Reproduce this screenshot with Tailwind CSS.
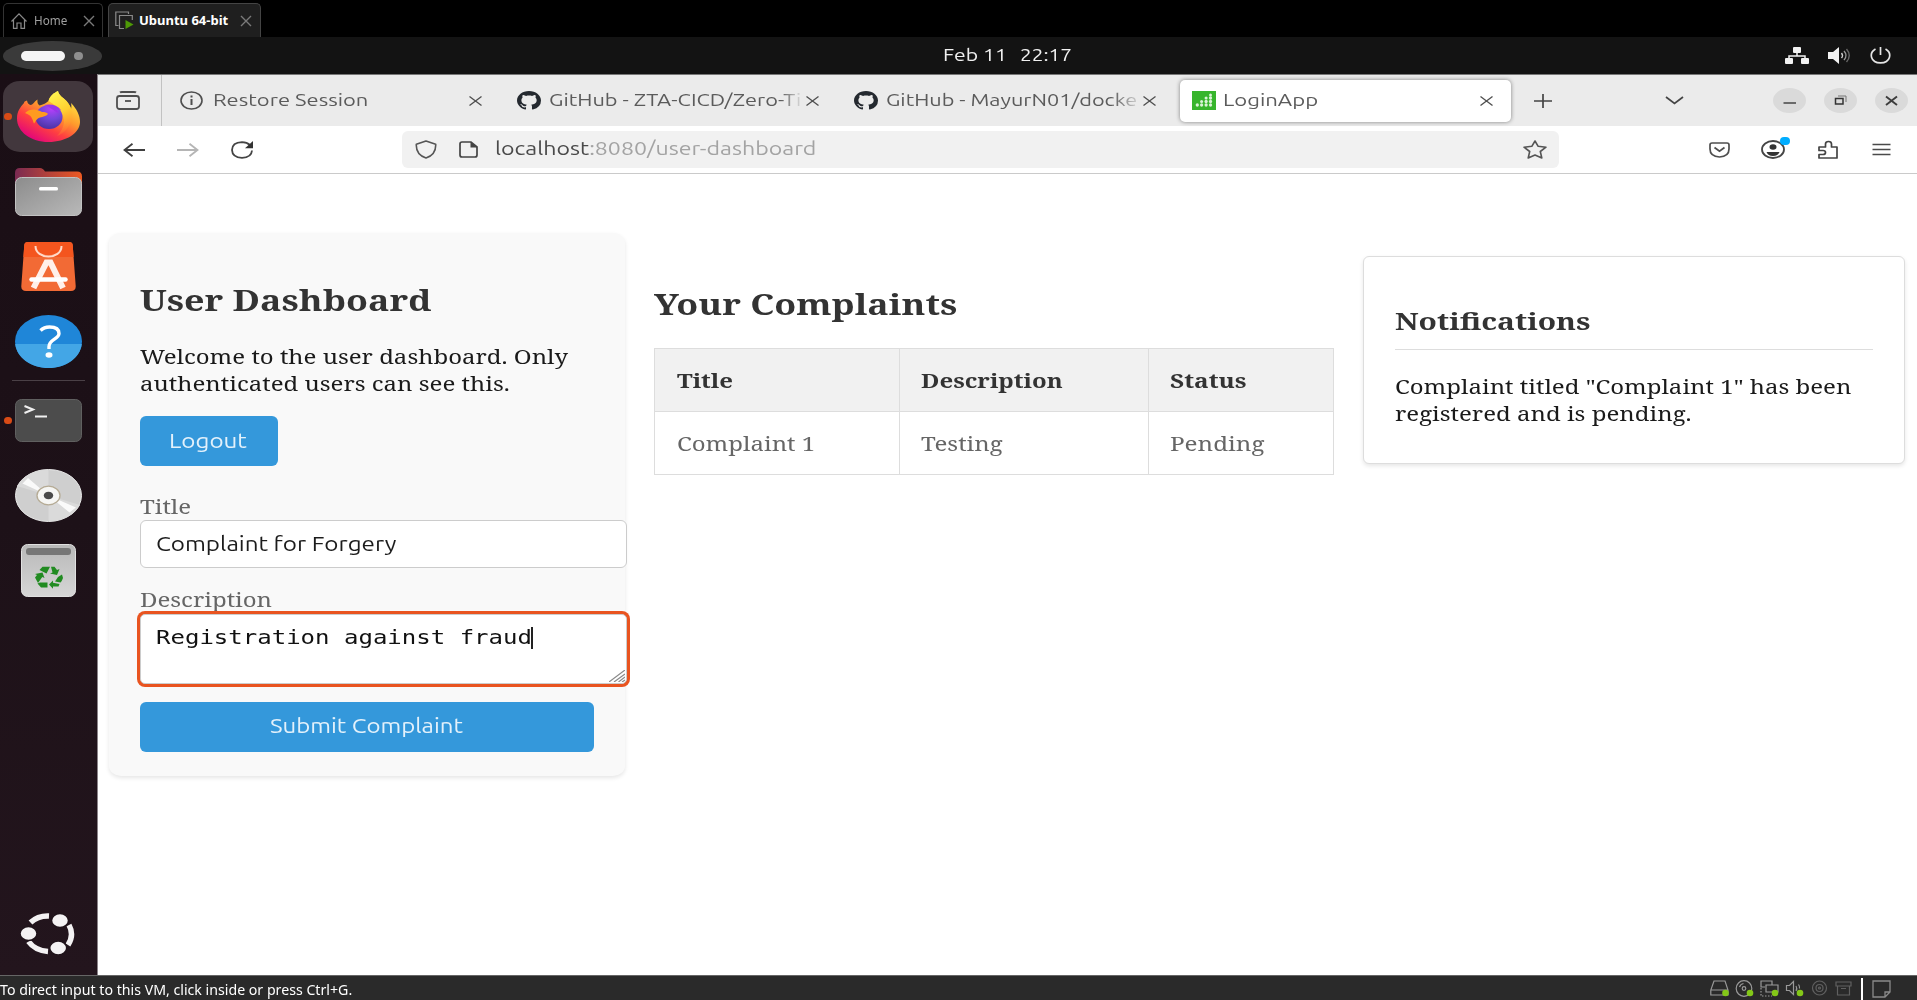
<!DOCTYPE html>
<html lang="en">
<head>
<meta charset="utf-8">
<title>Ubuntu 64-bit</title>
<script src="https://cdn.jsdelivr.net/npm/@tailwindcss/browser@4"></script>
</head>
<body class="w-[1917px] h-[1000px] overflow-hidden flex flex-col bg-black font-[Ubuntu,'Noto_Sans',sans-serif]">

<!-- Host window tabs -->
<header class="h-[37px] shrink-0 flex items-end pl-[3px] gap-[5px] bg-black font-['Noto_Sans','Open_Sans',sans-serif] text-[13px]">
  <div class="w-[100px] h-[34px] border border-b-0 border-[#333] rounded-t-[5px] flex items-center pl-[6px]">
    <svg class="size-[18px] shrink-0" viewBox="0 0 18 18" fill="none" stroke="#8a8a8a" stroke-width="1.2"><path d="M1.5 9.500 9 1.800l7.500 7.700M3.500 8v8.400h3.500v-5.400h4v5.400h3.500V8"/></svg>
    <div class="w-[49px] ml-[6px] shrink-0 text-[#a0a0a0]"><span class="inline-block origin-left whitespace-nowrap scale-x-[0.9]">Home</span></div>
    <svg class="size-[12px] shrink-0" viewBox="0 0 12 12" stroke="#7a7a7a" stroke-width="1.4"><path d="M1 1l10 10M11 1L1 11"/></svg>
  </div>
  <div class="w-[153px] h-[34px] border border-b-0 border-[#444] bg-[#1f1f1f] rounded-t-[5px] flex items-center pl-[6px]">
    <svg class="w-[20px] h-[19px] shrink-0" viewBox="0 0 20 19" fill="none" stroke="#8a8a8a" stroke-width="1.200"><path d="M3.500 14.500H.8V1h12.700v2"/><path d="M9 17.500H4.500V4.500h12.800V9"/><path d="M10.500 9l8 4.500-8 4.500z" fill="#4e9a06" stroke="none"/></svg>
    <div class="w-[89px] ml-[4px] shrink-0 text-white font-bold"><span class="inline-block origin-left whitespace-nowrap">Ubuntu 64-bit</span></div>
    <svg class="size-[12px] ml-[12px] shrink-0" viewBox="0 0 12 12" stroke="#7a7a7a" stroke-width="1.4"><path d="M1 1l10 10M11 1L1 11"/></svg>
  </div>
</header>

<!-- Desktop top bar -->
<div class="h-[37px] shrink-0 bg-[#131313] flex items-center pl-[3px] pb-px text-[17px] text-[#f0f0f0]">
  <div class="w-[99px] h-[30px] mt-[1px] shrink-0 rounded-[50px/50%] bg-[#3a3a3a] flex items-center pl-[18px] gap-[9px]">
    <div class="w-[44px] h-[10px] rounded-full bg-[#f5f5f5]"></div>
    <div class="w-[9px] h-[8px] rounded-full bg-[#8f8f8f]"></div>
  </div>
  <div class="w-[77px] ml-[841px] mt-[-1px]"><span class="inline-block origin-left whitespace-nowrap scale-x-[1.245]">Feb 11</span></div>
  <div class="w-[52px] mt-[-1px]"><span class="inline-block origin-left whitespace-nowrap scale-x-[1.225]">22:17</span></div>
  <div class="ml-auto mr-[26px] mt-[1px] flex items-center gap-[19px]">
    <svg class="w-[24px] h-[17px]" viewBox="0 0 24 17" fill="#f2f2f2"><rect x="8" y="0" width="8" height="6" rx="1"/><rect x="0" y="11" width="8" height="6" rx="1"/><rect x="16" y="11" width="8" height="6" rx="1"/><path d="M12 5v4M4 12V9h16v3" fill="none" stroke="#f2f2f2" stroke-width="1.500"/></svg>
    <svg class="w-[23px] h-[17px]" viewBox="0 0 23 17" fill="none"><path d="M0 5h5l6-5v17l-6-5H0z" fill="#f2f2f2"/><path d="M13.500 6q2 2.500 0 5" stroke="#ccc" stroke-width="1.400"/><path d="M16 4q4 4.500 0 9" stroke="#999" stroke-width="1.400"/><path d="M18.500 2q5.500 6.500 0 13" stroke="#666" stroke-width="1.400"/></svg>
    <svg class="w-[21px] h-[17px]" viewBox="0 0 21 17" fill="none" stroke="#e5e5e5" stroke-width="1.700"><path d="M10.500 0v8M5.500 2C-1.500 6 .5 15.800 10.500 15.800S22.500 6 15.500 2"/></svg>
  </div>
</div>

<div class="h-[901px] shrink-0 flex">
  <!-- Dock -->
  <aside class="w-[98px] shrink-0 border-r border-[#8a8388] bg-linear-to-b from-[#1a0e15] via-[#1d1118] to-[#23151d] flex flex-col">
    <div class="ml-[3px] mt-[7px] w-[90px] h-[71px] rounded-[17px/15px] bg-[#42373d] flex items-center shrink-0">
      <div class="ml-[1px] w-[8px] h-[7px] rounded-full bg-[#d84b16]"></div>
      <svg class="ml-[5px] w-[63px] h-[51px]" viewBox="0 0 63 51">
        <defs>
          <linearGradient id="fx" x1=".85" y1=".1" x2=".25" y2=".95"><stop offset="0" stop-color="#fff044"/><stop offset=".4" stop-color="#ff9a2c"/><stop offset=".68" stop-color="#ff4040"/><stop offset="1" stop-color="#e3067a"/></linearGradient>
          <linearGradient id="fy" x1=".3" y1="0" x2=".6" y2="1"><stop offset="0" stop-color="#fff44f"/><stop offset=".5" stop-color="#ffd030"/><stop offset="1" stop-color="#ff7f30" stop-opacity=".2"/></linearGradient>
          <radialGradient id="fg" cx=".6" cy=".15" r=".9"><stop offset="0" stop-color="#b83dfa"/><stop offset=".5" stop-color="#7047d8"/><stop offset="1" stop-color="#4a2f9e"/></radialGradient>
        </defs>
        <path d="M10 9.500c.5 3 2 4 3.500 4.500 3-.5 4-4 7-5.500-.3 2.500 0 4.500 2 6 5-1 7-3 9-4.500C33 4.500 37 2 41 0c1 5 5 6 8.500 10 2.500 3 4 5.500 4.500 8 .6-2 .5-4 0-6 6 6 9 13 9 19 0 11-14 20-31.500 20S0 41 0 27.500C0 20 3.500 16 7 12c0-1.500 1-2 3-2.500z" fill="url(#fx)"/>
        <path d="M31.500 10C33 4.500 37 2 41 0c1 5 5 6 8.500 10 2.500 3 4 5.500 4.500 8 3 12-3 23-14 27 7-7 9-15 5-22-3-6-8-10-13.500-13z" fill="url(#fy)"/>
        <ellipse cx="32" cy="26" rx="13.500" ry="12" fill="url(#fg)"/>
        <path d="M27 14c7-1.500 13 0 17 5l-5-1 3 4c-6-2-8-6-15-8z" fill="#9a35e8"/>
        <path d="M8 22c5-5 12-4 17-1 3 0 5 .5 6 2-2 2.500-5 2.500-8 3.500-4 1.500-4 4-6 6-2-5-2-8-9-10.500z" fill="#ff9b1f"/>
      </svg>
    </div>
    <svg class="ml-[15px] mt-[16px] w-[67px] h-[48px] shrink-0" viewBox="0 0 67 48">
      <defs><linearGradient id="fo"><stop offset="0" stop-color="#7a2a52"/><stop offset="1" stop-color="#ee5a22"/></linearGradient><linearGradient id="fl" x2="1" y2="1"><stop offset="0" stop-color="#8c8c8c"/><stop offset="1" stop-color="#b9b9b9"/></linearGradient></defs>
      <path d="M5 0h20q3 0 5 3.500h32q5 0 5 5V30H0V5q0-5 5-5z" fill="url(#fo)"/><rect x=".5" y="9.500" width="66" height="38" rx="6" fill="url(#fl)" stroke="#c2c2c2"/><rect x="24" y="19" width="19" height="3.500" rx="1.500" fill="#fff"/>
    </svg>
    <svg class="ml-[21px] mt-[26px] w-[55px] h-[49px] shrink-0" viewBox="0 0 55 49">
      <path d="M7 0h41q3.500 0 3.700 3l3 41q.3 5-4.700 5H5q-5 0-4.700-5l3-41Q3.500 0 7 0z" fill="#f26a35"/><path d="M7 0h41q3.500 0 3.700 3l.9 12H2.400l.9-12Q3.500 0 7 0z" fill="#f4551e"/>
      <path d="M14.500 4c0 14 26 14 26 0" fill="none" stroke="#ffd9c8" stroke-width="2"/>
      <path d="M12.500 46 25.500 20.500h4L42 46" fill="none" stroke="#fff0ea" stroke-width="6"/><path d="M10.500 37.500h34" stroke="#fff" stroke-width="4.500" stroke-linecap="round"/>
    </svg>
    <svg class="ml-[15px] mt-[24px] w-[67px] h-[53px] shrink-0" viewBox="0 0 67 53">
      <ellipse cx="33.500" cy="26.500" rx="33.500" ry="26.500" fill="#1f86d8"/><path d="M.2 29C2 43 16 53 33.500 53S65 43 66.800 29z" fill="#43a6e6"/>
      <path d="M25.500 15.500q3.500-3.500 9-3.500 9.500 0 9.500 6.500c0 5.500-10 6-10 13v2.500" fill="none" stroke="#fff" stroke-width="3.400"/><ellipse cx="34" cy="40" rx="3.500" ry="2.800" fill="#fff"/>
    </svg>
    <div class="ml-[12px] mt-[12px] w-[73px] h-px bg-[#4a4046] shrink-0"></div>
    <div class="mt-[18px] h-[43px] flex items-center shrink-0">
      <div class="ml-[4px] w-[8px] h-[7px] rounded-full bg-[#d84b16]"></div>
      <svg class="ml-[3px] w-[67px] h-[43px]" viewBox="0 0 67 43"><rect x=".5" y=".5" width="66" height="42" rx="6" fill="#4c4c4c" stroke="#606060"/><path d="M9.500 7l8.500 3.500-8.500 3.500M20 17.500h12" fill="none" stroke="#f0f0f0" stroke-width="2"/></svg>
    </div>
    <svg class="ml-[15px] mt-[27px] w-[67px] h-[53px] shrink-0" viewBox="0 0 67 53">
      <ellipse cx="33.500" cy="26.500" rx="33" ry="26" fill="#cfcfcf" stroke="#e8e8e8"/><path d="M33.500 26.500 2 17A33 26 0 0 1 33.500.8zM33.500 26.500 65 36a33 26 0 0 1-31.500 16z" fill="#dadada"/><path d="M33.500 26.500 7.500 14.500l5.500-5.500zM33.500 26.500l21 17 6.500-5z" fill="#fafafa"/>
      <ellipse cx="33.500" cy="26.500" rx="11.500" ry="9.300" fill="#f6f6f4" stroke="#b5ab95" stroke-width="1.300"/><ellipse cx="33.500" cy="26.500" rx="4.700" ry="3.800" fill="#4a4a4a"/>
    </svg>
    <svg class="ml-[21px] mt-[22px] w-[55px] h-[53px] shrink-0" viewBox="0 0 55 53">
      <defs><linearGradient id="tr" x2="0" y2="1"><stop offset="0" stop-color="#b8b8b8"/><stop offset="1" stop-color="#d6d6d6"/></linearGradient></defs>
      <rect x=".5" y=".5" width="54" height="52" rx="6" fill="url(#tr)" stroke="#e0e0e0"/><rect x="5" y="4" width="45" height="7" rx="3" fill="#777"/>
      <g fill="#218b21"><path d="M18.500 26l3-3.200h7.500l-3.500 6.700zM30 22.800h3.500l2.500 3.200 2.500-1-2.500 6-7-1.500 2.500-1z"/><path d="M37 33l4-2.500 1 3.500q-1 3-2.500 4.500L34 37.500zM38.500 40l-1 2.500H32v2.200l-4-4.200 4-4v2.200z"/><path d="M19 38.500h7.500v5H20l-3.500-4zM14 33.500l2-2.500-2-1 7.500-1.500 2 5.500-2.200-1-4.300 6z"/></g>
    </svg>
    <svg class="ml-[20px] mt-auto mb-[20px] w-[56px] h-[42px] shrink-0" viewBox="0 0 56 42" fill="#f4f2f3">
      <path d="M10.500 9.500Q18 2.500 29 3M8.500 28.500Q15 37.500 28 38.500M49 12Q54.500 22 48 32" fill="none" stroke="#f4f2f3" stroke-width="5.500"/>
      <g stroke="#1f131a" stroke-width="1.500"><ellipse cx="8.500" cy="20.500" rx="8.500" ry="7"/><ellipse cx="40" cy="7.500" rx="8.500" ry="7"/><ellipse cx="38.200" cy="35" rx="8.500" ry="7"/></g>
    </svg>
  </aside>

  <!-- Browser window -->
  <div class="flex-1 flex flex-col bg-white">
    <!-- Tab strip -->
    <div class="h-[52px] shrink-0 bg-[#ebebeb] border-t border-[#777] flex items-center text-[17px] text-[#5b5b5b]">
      <div class="w-[64px] h-full border-r border-[#c2c2c2] flex items-center pl-[18px]">
        <svg class="w-[24px] h-[19px]" viewBox="0 0 24 19" fill="none" stroke="#4f4f4f" stroke-width="1.800"><path d="M4 1.500Q4.500 1 6 1h12q1.500 0 2 .5"/><rect x="1" y="5" width="22" height="13" rx="2.500"/><path d="M9 10h6"/></svg>
      </div>
      <div class="w-[346px] flex items-center pl-[18px]">
        <svg class="w-[23px] h-[19px]" viewBox="0 0 23 19" fill="none" stroke="#4f4f4f" stroke-width="1.600"><ellipse cx="11.500" cy="9.500" rx="10.500" ry="8.500"/><path d="M11.500 8v6M11.500 4.500v2" stroke-width="2"/></svg>
        <div class="w-[256px] ml-[10px] pb-[2px]"><span class="inline-block origin-left whitespace-nowrap scale-x-[1.29]">Restore Session</span></div>
        <svg class="w-[13px] h-[10px]" viewBox="0 0 13 10" stroke="#4f4f4f" stroke-width="1.300"><path d="M.5.500l12 9M12.500.5l-12 9"/></svg>
      </div>
      <div class="w-[337px] flex items-center pl-[9px]">
        <svg class="w-[24px] h-[19px]" viewBox="0 0 16 16" preserveAspectRatio="none" fill="#24292f"><path d="M8 0C3.580 0 0 3.580 0 8c0 3.540 2.290 6.530 5.470 7.590.4.070.55-.17.55-.38 0-.19-.01-.82-.01-1.490-2.010.37-2.530-.49-2.690-.94-.09-.23-.48-.94-.82-1.130-.28-.15-.68-.52-.01-.53.63-.01 1.080.58 1.230.82.72 1.210 1.870.87 2.330.66.07-.52.28-.87.51-1.070-1.780-.2-3.640-.89-3.640-3.950 0-.87.31-1.590.82-2.150-.08-.2-.36-1.020.08-2.120 0 0 .67-.21 2.200.82.64-.18 1.320-.27 2-.27s1.360.09 2 .27c1.530-1.040 2.200-.82 2.200-.82.44 1.100.16 1.920.08 2.120.51.56.82 1.270.82 2.150 0 3.070-1.870 3.750-3.650 3.950.29.25.54.73.54 1.480 0 1.070-.01 1.930-.01 2.200 0 .21.15.46.55.38A8.010 8.010 0 0 0 16 8c0-4.420-3.580-8-8-8z"/></svg>
        <div class="w-[252px] ml-[8px] pb-[2px] overflow-hidden mask-r-from-[92%] mask-r-to-[101%]"><span class="inline-block origin-left whitespace-nowrap scale-x-[1.28]">GitHub - ZTA-CICD/Zero-Ti</span></div>
        <svg class="ml-[5px] w-[13px] h-[10px]" viewBox="0 0 13 10" stroke="#4f4f4f" stroke-width="1.300"><path d="M.5.500l12 9M12.500.5l-12 9"/></svg>
      </div>
      <div class="w-[335px] flex items-center pl-[9px]">
        <svg class="w-[24px] h-[19px]" viewBox="0 0 16 16" preserveAspectRatio="none" fill="#24292f"><path d="M8 0C3.580 0 0 3.580 0 8c0 3.540 2.290 6.530 5.470 7.590.4.070.55-.17.55-.38 0-.19-.01-.82-.01-1.490-2.010.37-2.530-.49-2.690-.94-.09-.23-.48-.94-.82-1.130-.28-.15-.68-.52-.01-.53.63-.01 1.080.58 1.230.82.72 1.210 1.870.87 2.330.66.07-.52.28-.87.51-1.070-1.780-.2-3.640-.89-3.640-3.950 0-.87.31-1.590.82-2.150-.08-.2-.36-1.020.08-2.120 0 0 .67-.21 2.200.82.64-.18 1.320-.27 2-.27s1.360.09 2 .27c1.530-1.040 2.200-.82 2.200-.82.44 1.100.16 1.920.08 2.120.51.56.82 1.270.82 2.150 0 3.070-1.870 3.750-3.650 3.950.29.25.54.73.54 1.480 0 1.070-.01 1.930-.01 2.200 0 .21.15.46.55.38A8.010 8.010 0 0 0 16 8c0-4.420-3.580-8-8-8z"/></svg>
        <div class="w-[252px] ml-[8px] pb-[2px] overflow-hidden mask-r-from-[90%] mask-r-to-[102%]"><span class="inline-block origin-left whitespace-nowrap scale-x-[1.275]">GitHub - MayurN01/docke</span></div>
        <svg class="ml-[5px] w-[13px] h-[10px]" viewBox="0 0 13 10" stroke="#4f4f4f" stroke-width="1.300"><path d="M.5.500l12 9M12.500.5l-12 9"/></svg>
      </div>
      <div class="w-[331px] h-[42px] rounded-[5px] bg-white shadow-[0_0_4px_rgba(0,0,0,0.45)] flex items-center pl-[12px]">
        <svg class="w-[24px] h-[19px]" viewBox="0 0 25 19" preserveAspectRatio="none"><path fill="#37b52c" d="M0 0h25v19H0z"/><g fill="#d9f3d6"><circle cx="5.500" cy="14" r="1.700"/><circle cx="10" cy="14" r="1.700"/><circle cx="14.700" cy="14" r="1.700"/><circle cx="19.300" cy="14" r="1.700"/><circle cx="10" cy="10.500" r="1.600"/><circle cx="14.700" cy="10.500" r="1.700"/><circle cx="19.300" cy="10.500" r="1.700"/><circle cx="14.700" cy="7" r="1.600"/><circle cx="19.300" cy="7" r="1.700"/><circle cx="19.300" cy="4" r="1.500"/></g></svg>
        <div class="w-[256px] ml-[7px] pb-[2px]"><span class="inline-block origin-left whitespace-nowrap scale-x-[1.3]">LoginApp</span></div>
        <svg class="ml-px w-[13px] h-[10px]" viewBox="0 0 13 10" stroke="#4f4f4f" stroke-width="1.300"><path d="M.5.500l12 9M12.500.5l-12 9"/></svg>
      </div>
      <svg class="ml-[23px] w-[18px] h-[14px]" viewBox="0 0 18 14" stroke="#444" stroke-width="1.700"><path d="M0 7h18M9 0v14"/></svg>
      <svg class="ml-[113px] w-[19px] h-[9px]" viewBox="0 0 19 9" fill="none" stroke="#444" stroke-width="1.700"><path d="M1 1l8.500 6.500L18 1"/></svg>
      <div class="ml-auto mr-[9px] flex gap-[18px]">
        <svg class="w-[33px] h-[25px]" viewBox="0 0 33 25"><ellipse cx="16.500" cy="12.500" rx="16.500" ry="12.500" fill="#dadada"/><path d="M10.500 15h12.500" stroke="#444" stroke-width="1.500"/></svg>
        <svg class="w-[33px] h-[25px]" viewBox="0 0 33 25" fill="none"><ellipse cx="16.500" cy="12.500" rx="16.500" ry="12.500" fill="#dadada"/><path d="M11.500 10.500h7.500v5.500h-7.500z" stroke="#333" stroke-width="1.500"/><path d="M14 8h8v6" stroke="#777"/></svg>
        <svg class="w-[33px] h-[25px]" viewBox="0 0 33 25"><ellipse cx="16.500" cy="12.500" rx="16.500" ry="12.500" fill="#dadada"/><path d="M11 8.500l11 8.500M22 8.500L11 17" stroke="#3c3c3c" stroke-width="1.900"/></svg>
      </div>
    </div>

    <!-- Address bar -->
    <div class="h-[48px] shrink-0 border-b border-[#cacaca] flex items-center text-[18px]">
      <svg class="ml-[25px] w-[22px] h-[14px]" viewBox="0 0 22 14" fill="none" stroke="#3f3f3f" stroke-width="1.800"><path d="M22 7H1.500M9.500.7L1.500 7l8 6.300"/></svg>
      <svg class="ml-[32px] w-[22px] h-[14px]" viewBox="0 0 22 14" fill="none" stroke="#b5b5b5" stroke-width="1.800"><path d="M0 7h20.500M12.500.7l8 6.300-8 6.300"/></svg>
      <svg class="ml-[32px] w-[22px] h-[18px]" viewBox="0 0 22 18" fill="none" stroke="#444" stroke-width="1.800"><path d="M19 4Q16 1.200 11 1.200 1.200 1.500 1 9q.3 7.500 10 7.800Q20.500 16.500 21 9.500"/><path d="M22 0v7.300h-8z" fill="#333" stroke="none"/></svg>
      <div class="ml-[149px] w-[1157px] h-[37px] rounded-[6px] bg-[#f1f1f1] flex items-center pl-[13px]">
        <svg class="w-[22px] h-[19px]" viewBox="0 0 22 19" fill="none" stroke="#555" stroke-width="1.600"><path d="M11 1 20.700 4.200C21 10 18.500 15.500 11 18 3.500 15.500 1 10 1.300 4.200z" stroke-linejoin="round"/></svg>
        <svg class="ml-[22px] w-[19px] h-[17px]" viewBox="0 0 19 17" fill="none" stroke="#444" stroke-width="1.700"><path d="M3 1h9l6 5v8q0 2-2 2H3q-2 0-2-2V3q0-2 2-2z"/><path d="M11.500 1v5.500H18z" fill="#444" stroke="none"/></svg>
        <div class="ml-[17px] w-[1028px] pb-[2px] text-[#a3a3a3]"><span class="inline-block origin-left whitespace-nowrap scale-x-[1.285]"><span class="text-[#4a4a4a]">localhost</span>:8080/user-dashboard</span></div>
        <svg class="w-[24px] h-[19px]" viewBox="0 0 24 19" preserveAspectRatio="none" fill="none" stroke="#555" stroke-width="1.600" stroke-linejoin="round"><path d="M12 1l3.200 5.300 7.800.9-5.700 4.300 1.500 6.500L12 15l-6.800 3 1.500-6.500L1 7.200l7.800-.9z"/></svg>
      </div>
      <svg class="ml-[150px] w-[21px] h-[16px]" viewBox="0 0 21 16" fill="none" stroke="#4f4f4f" stroke-width="1.700"><path d="M3 1h15q2 0 2 2v4q0 7.500-9.500 8Q1 14.500 1 7V3q0-2 2-2z"/><path d="M5.500 5.500l5 3.800 5-3.800"/></svg>
      <div class="relative ml-[31px]">
        <svg class="w-[24px] h-[19px]" viewBox="0 0 24 19" fill="none" stroke="#444" stroke-width="1.800"><ellipse cx="12" cy="9.500" rx="11" ry="8.500"/><ellipse cx="12" cy="7" rx="3.500" ry="2.800" fill="#333" stroke="none"/><path d="M5.500 12h13q-1.500 4-6.500 4t-6.500-4z" fill="#333" stroke="none"/></svg>
        <div class="absolute left-[19px] top-[-3px] w-[10px] h-[8px] rounded-full bg-[#00adff]"></div>
      </div>
      <svg class="ml-[33px] w-[21px] h-[19px]" viewBox="0 0 21 19" fill="none" stroke="#444" stroke-width="1.700" stroke-linejoin="round"><path d="M1 7h6.500V4q0-2.500 3-2.500t3 2.500v3H19v11H1v-3.500h4q2.500 0 2.500-2T5 10.500H1z"/></svg>
      <svg class="ml-[33px] w-[19px] h-[13px]" viewBox="0 0 19 13" stroke="#4a4a4a" stroke-width="1.500"><path d="M.5 1.500h18M.5 6.500h18M.5 11.500h18"/></svg>
    </div>

    <!-- Page -->
    <main class="flex-1 flex items-start pl-[11px] font-['Noto_Serif','DejaVu_Serif',serif] text-[20px] leading-[27px] text-[#1a1a1a]">
      <section class="mt-[59px] w-[516px] h-[543px] shrink-0 rounded-[12px/10px] bg-[#f9f9f9] shadow-[0_2px_4px_rgba(0,0,0,0.1)] pl-[31px] pt-[49px]">
        <h2 class="text-[28px] leading-[36px] font-bold text-[#333]"><span class="inline-block origin-left whitespace-nowrap align-top scale-x-[1.28]">User Dashboard</span></h2>
        <p class="mt-[25px] flex flex-col items-start"><span class="origin-left whitespace-nowrap scale-x-[1.2]">Welcome to the user dashboard. Only</span><span class="origin-left whitespace-nowrap scale-x-[1.2]">authenticated users can see this.</span></p>
        <button class="mt-[19px] w-[138px] h-[50px] rounded-[6px] bg-[#3498db] text-[#e3f1fb] flex items-center pl-[29px] font-[Ubuntu,'Noto_Sans',sans-serif]"><span class="origin-left whitespace-nowrap mt-[-2px] scale-x-[1.21]">Logout</span></button>
        <div class="mt-[27px] text-[#666]"><span class="inline-block origin-left whitespace-nowrap align-top scale-x-[1.2]">Title</span></div>
        <div class="w-[487px] h-[48px] rounded-[6px] border border-[#ccc] bg-white flex items-center pl-[15px] text-[#1c1c1c] font-[Ubuntu,'Noto_Sans',sans-serif]"><span class="origin-left whitespace-nowrap mt-[-2px] scale-x-[1.21]">Complaint for Forgery</span></div>
        <div class="mt-[18px] text-[#666]"><span class="inline-block origin-left whitespace-nowrap align-top scale-x-[1.2]">Description</span></div>
        <div class="relative mt-[1px] w-[487px] h-[70px] rounded-[5px] border border-[#ccc] bg-white ring-[3px] ring-[#e95420] pl-[15px] pt-[10px] flex items-start text-[19px] leading-[24px] text-[#111] font-['DejaVu_Sans_Mono',monospace]">
          <div class="w-[375px]"><span class="inline-block origin-left whitespace-nowrap align-top scale-x-[1.264]">Registration against fraud</span></div>
          <div class="w-[2px] h-[22px] mt-[2px] bg-[#222]"></div>
          <svg class="absolute right-[1px] bottom-[1px] w-[16px] h-[12px]" viewBox="0 0 16 12" stroke="#8a8a8a" stroke-width="1.200"><path d="M0 12L16 0M5 12l11-8M9.500 12L16 7M13 12l3-2"/></svg>
        </div>
        <button class="mt-[18px] w-[454px] h-[50px] rounded-[6px] bg-[#3498db] text-[#e3f1fb] flex items-center pl-[130px] font-[Ubuntu,'Noto_Sans',sans-serif]"><span class="origin-left whitespace-nowrap mt-[-3px] scale-x-[1.2]">Submit Complaint</span></button>
      </section>

      <section class="mt-[112px] ml-[29px] w-[679px] shrink-0">
        <h2 class="text-[28px] leading-[36px] font-bold text-[#333]"><span class="inline-block origin-left whitespace-nowrap align-top scale-x-[1.28]">Your Complaints</span></h2>
        <table class="mt-[26px] w-[679px] table-fixed border-collapse text-left">
          <colgroup><col class="w-[245px]"><col class="w-[249px]"><col class="w-[185px]"></colgroup>
          <thead><tr class="h-[63px] bg-[#f1f1f1] text-[#333] font-bold">
            <th class="border border-[#ddd] pl-[22px]"><span class="inline-block origin-left whitespace-nowrap scale-x-[1.2]">Title</span></th>
            <th class="border border-[#ddd] pl-[21px]"><span class="inline-block origin-left whitespace-nowrap scale-x-[1.2]">Description</span></th>
            <th class="border border-[#ddd] pl-[21px]"><span class="inline-block origin-left whitespace-nowrap scale-x-[1.22]">Status</span></th>
          </tr></thead>
          <tbody><tr class="h-[63px] text-[#666]">
            <td class="border border-[#ddd] pl-[22px]"><span class="inline-block origin-left whitespace-nowrap scale-x-[1.2]">Complaint 1</span></td>
            <td class="border border-[#ddd] pl-[21px]"><span class="inline-block origin-left whitespace-nowrap scale-x-[1.2]">Testing</span></td>
            <td class="border border-[#ddd] pl-[21px]"><span class="inline-block origin-left whitespace-nowrap scale-x-[1.21]">Pending</span></td>
          </tr></tbody>
        </table>
      </section>

      <section class="mt-[82px] ml-[30px] w-[542px] h-[208px] shrink-0 rounded-[6px] border border-[#ddd] bg-white shadow-[0_2px_4px_rgba(0,0,0,0.1)] px-[31px] pt-[48px]">
        <h3 class="h-[45px] border-b border-[#ddd] text-[23.500px] leading-[32px] font-bold text-[#333]"><span class="inline-block origin-left whitespace-nowrap align-top scale-x-[1.275]">Notifications</span></h3>
        <p class="mt-[23px] flex flex-col items-start"><span class="origin-left whitespace-nowrap scale-x-[1.2]">Complaint titled "Complaint 1" has been</span><span class="origin-left whitespace-nowrap scale-x-[1.2]">registered and is pending.</span></p>
      </section>
    </main>
  </div>
</div>

<!-- Host status bar -->
<footer class="h-[25px] shrink-0 bg-[#2a2a2a] border-t border-[#666] flex items-center font-['Noto_Sans','Open_Sans',sans-serif] text-[15px] leading-[24px] text-white">
  <span class="origin-left whitespace-nowrap mt-[1px] scale-x-[0.944]">To direct input to this VM, click inside or press Ctrl+G.</span>
  <div class="ml-auto mr-[26px] mt-[1px] flex items-center">
    <svg class="w-[20px] h-[17px] mr-[5px]" viewBox="0 0 20 17" fill="none" stroke="#999" stroke-width="1.200"><path d="M4 1h11l3 9v5H.8v-5L4 1zM1 10h17"/><circle cx="15.500" cy="13" r="3.300" fill="#84c818" stroke="none"/></svg>
    <svg class="w-[20px] h-[17px] mr-[5px]" viewBox="0 0 20 17" fill="none" stroke="#999" stroke-width="1.200"><circle cx="9" cy="8.500" r="7.800"/><circle cx="9" cy="8.500" r="1.800"/><path d="M4.500 7q1-3 4-3.500"/><circle cx="15" cy="13" r="3.300" fill="#84c818" stroke="none"/></svg>
    <svg class="w-[20px] h-[17px] mr-[5px]" viewBox="0 0 20 17" fill="none" stroke="#999" stroke-width="1.200"><path d="M5 7H1V1h11v4M6 5h12v7H6z"/><path d="M1 8v8h11" stroke-dasharray="1.500 1.500"/><circle cx="15" cy="13" r="3.300" fill="#84c818" stroke="none"/></svg>
    <svg class="w-[20px] h-[17px] mr-[5px]" viewBox="0 0 20 17" fill="none" stroke="#999" stroke-width="1.200"><path d="M1.500 5.500h3l4-4v13l-4-4h-3zM11 6q1.500 2.500 0 5M13.500 4.500q1.500 2 1 4"/><circle cx="15" cy="13" r="3.300" fill="#84c818" stroke="none"/></svg>
    <svg class="w-[20px] h-[17px] mr-[5px]" viewBox="0 0 20 17" fill="none" stroke="#606060" stroke-width="1.200"><circle cx="9.500" cy="8" r="7"/><circle cx="9.500" cy="8" r="3.500"/><circle cx="9.500" cy="8" r="1"/></svg>
    <svg class="w-[18px] h-[17px] mr-[8px]" viewBox="0 0 18 17" fill="none" stroke="#606060" stroke-width="1.200"><path d="M1 2h15v4H1zM2.500 6v9h12V6M6 8.500h5"/></svg>
    <div class="w-[2px] h-[22px] bg-white mr-[9px]"></div>
    <svg class="w-[19px] h-[18px]" viewBox="0 0 19 18" fill="none" stroke="#8a8a8a" stroke-width="1.300"><path d="M1 1h17v11l-5 5H1zM13 17v-5h5"/></svg>
  </div>
</footer>
</body>
</html>
